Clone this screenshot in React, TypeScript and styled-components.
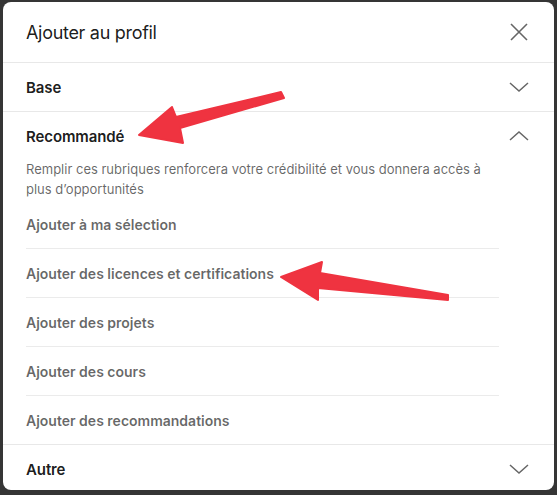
import styled, { createGlobalStyle } from "styled-components";

const GlobalStyle = createGlobalStyle`
	html, body { margin:0; padding:0; background:#333; }
	body { font-family:Inter, "Noto Sans", "Liberation Sans", sans-serif; -webkit-font-smoothing:antialiased; }
`;

const Backdrop = styled.div`
	width:557px;height:495px;box-sizing:border-box;padding:2px 3px 5px;background:#353535;position:relative;overflow:hidden;
`;

const Modal = styled.div`
	height:488px;background:#fff;border-radius:8px;overflow:hidden;display:flex;flex-direction:column;
`;

const Header = styled.div`
	height:60px;display:flex;align-items:center;justify-content:space-between;padding:0 23px 0 23px;border-bottom:1px solid #e8e8e8;flex-shrink:0;
`;

const Title = styled.h2`
	margin:0;font-size:18px;font-weight:400;color:rgba(0,0,0,0.9);letter-spacing:-0.3px;
`;

const IconButton = styled.button`
	border:0;background:none;padding:0;width:24px;height:24px;display:flex;align-items:center;justify-content:center;color:#666;
`;

const Section = styled.div<{ $last?: boolean }>`
	border-bottom:${p => (p.$last ? "0" : "1px solid #e8e8e8")};
`;

const SectionHead = styled.div`
	height:48px;display:flex;align-items:center;justify-content:space-between;padding:0 23px 0 23px;
`;

const SectionTitle = styled.span`
	font-size:15px;font-weight:600;color:rgba(0,0,0,0.9);letter-spacing:-0.1px;
`;

const SectionBody = styled.div`
	padding:0 55px 0 23px;
`;

const Description = styled.p`
	margin:0 0 1px;font-size:13px;line-height:19.5px;color:rgba(0,0,0,0.6);width:462px;
`;

const ItemList = styled.ul`
	list-style:none;margin:0;padding:0;
`;

const Item = styled.li`
	height:48px;display:flex;align-items:center;font-size:14px;font-weight:600;color:rgba(0,0,0,0.6);border-bottom:1px solid #ebebeb;

	&:last-child { border-bottom:0; }
`;

const Overlay = styled.svg`
	position:absolute;left:0;top:0;pointer-events:none;
`;

function Chevron({ up }: { up?: boolean }) {
	return (
		<svg width="24" height="24" viewBox="0 0 24 24">
			<path d={up ? "M3 16 L12 8 L21 16" : "M3 8 L12 16 L21 8"} fill="none" stroke="#666" strokeWidth="1.5" />
		</svg>
	);
}

const items = [
	"Ajouter à ma sélection",
	"Ajouter des licences et certifications",
	"Ajouter des projets",
	"Ajouter des cours",
	"Ajouter des recommandations",
];

export default function App() {
	return (
		<>
			<GlobalStyle />
			<Backdrop>
				<Modal>
					<Header>
						<Title>Ajouter au profil</Title>
						<IconButton aria-label="Fermer">
							<svg width="18" height="18" viewBox="0 0 18 18">
								<path d="M1 1 L17 17 M17 1 L1 17" stroke="#666" strokeWidth="1.6" fill="none" />
							</svg>
						</IconButton>
					</Header>

					<Section>
						<SectionHead>
							<SectionTitle>Base</SectionTitle>
							<Chevron />
						</SectionHead>
					</Section>

					<Section>
						<SectionHead>
							<SectionTitle>Recommandé</SectionTitle>
							<Chevron up />
						</SectionHead>
						<SectionBody>
							<Description>
								Remplir ces rubriques renforcera votre crédibilité et vous donnera accès à plus d’opportunités
							</Description>
							<ItemList>
								{items.map(t => (
									<Item key={t}>{t}</Item>
								))}
							</ItemList>
						</SectionBody>
					</Section>

					<Section $last>
						<SectionHead>
							<SectionTitle>Autre</SectionTitle>
							<Chevron />
						</SectionHead>
					</Section>
				</Modal>

				<Overlay width="557" height="495" viewBox="0 0 557 495">
					<g fill="#ef3340" stroke="#ef3340" strokeWidth="2" strokeLinejoin="round">
						<polygon points="139,135 172,107 176,117 281,92 284,98 180,128 183,143" />
						<polygon points="281,277 322,262 320,273 448,295 448,300 318,288 318,300" />
					</g>
				</Overlay>
			</Backdrop>
		</>
	);
}
